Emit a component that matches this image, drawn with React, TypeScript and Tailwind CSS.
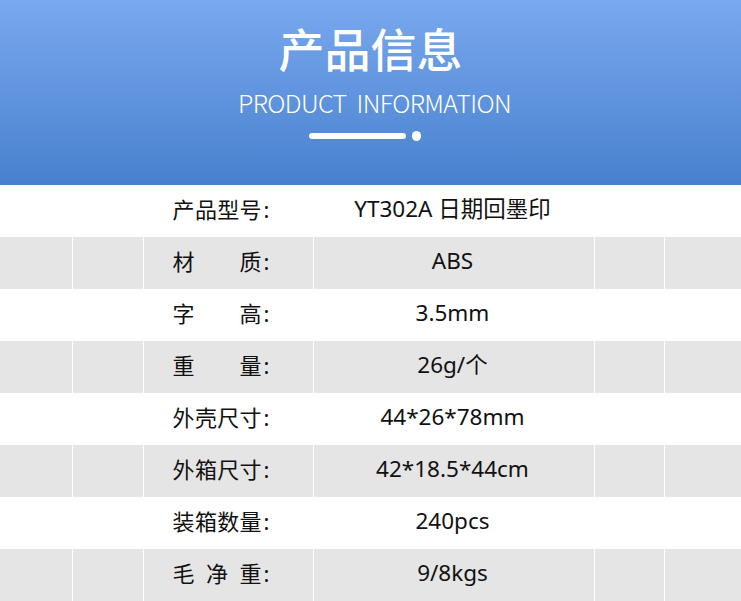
import React from "react";

const rows: { label: string; value: string }[] = [
  { label: "产品型号", value: "YT302A 日期回墨印" },
  { label: "材质", value: "ABS" },
  { label: "字高", value: "3.5mm" },
  { label: "重量", value: "26g/个" },
  { label: "外壳尺寸", value: "44*26*78mm" },
  { label: "外箱尺寸", value: "42*18.5*44cm" },
  { label: "装箱数量", value: "240pcs" },
  { label: "毛净重", value: "9/8kgs" },
];

const font = { fontFamily: '"Noto Sans", "Open Sans", "Noto Sans CJK SC", sans-serif' };

export default function App() {
  return (
    <div className="w-[741px] h-[601px] overflow-hidden bg-white" style={font}>
      <div className="h-[185px] bg-gradient-to-b from-[#79a9ef] to-[#4880ce] flex flex-col items-center">
        <div className="mt-[16px] h-[62px] text-[46px] leading-[62px] font-medium text-white" style={{ fontFamily: '"Noto Sans CJK SC", sans-serif' }}>
          产品信息
        </div>
        <div className="mt-[8px] ml-[8px] h-[32px] text-[25px] leading-[32px] text-white whitespace-pre tracking-[-0.6px]" style={{ fontFamily: '"Noto Sans CJK SC", sans-serif', fontWeight: 300 }}>
          PRODUCT  INFORMATION
        </div>
        <div className="mt-[13px] flex items-center gap-[6px] mr-[11px]">
          <div className="w-[97px] h-[6px] rounded-full bg-white" />
          <div className="w-[9px] h-[10px] rounded-full bg-white" />
        </div>
      </div>
      {rows.map((r, i) => {
        const gray = i % 2 === 1;
        const bg = gray ? "bg-[#e5e5e5]" : "bg-white";
        const chars = Array.from(r.label);
        return (
          <div key={i} className="grid grid-cols-[72px_71px_170px_281px_70px_77px] h-[52px]">
            <div className={bg} />
            <div className={`${bg} border-l border-white`} />
            <div className={`${bg} border-l border-white flex items-center justify-center pr-[15px] pb-[4px]`}>
              <div className="flex items-center text-[22px] text-[#111]">
                <span className="w-[89px] flex justify-between">
                  {chars.map((c, j) => (
                    <span key={j}>{c}</span>
                  ))}
                </span>
                <span className="ml-[2px]">:</span>
              </div>
            </div>
            <div className={`${bg} border-l border-white flex items-center justify-center text-[22.5px] text-[#111] pr-[3px] pb-[4px]`}>
              {r.value}
            </div>
            <div className={`${bg} border-l border-white`} />
            <div className={`${bg} border-l border-white`} />
          </div>
        );
      })}
    </div>
  );
}
